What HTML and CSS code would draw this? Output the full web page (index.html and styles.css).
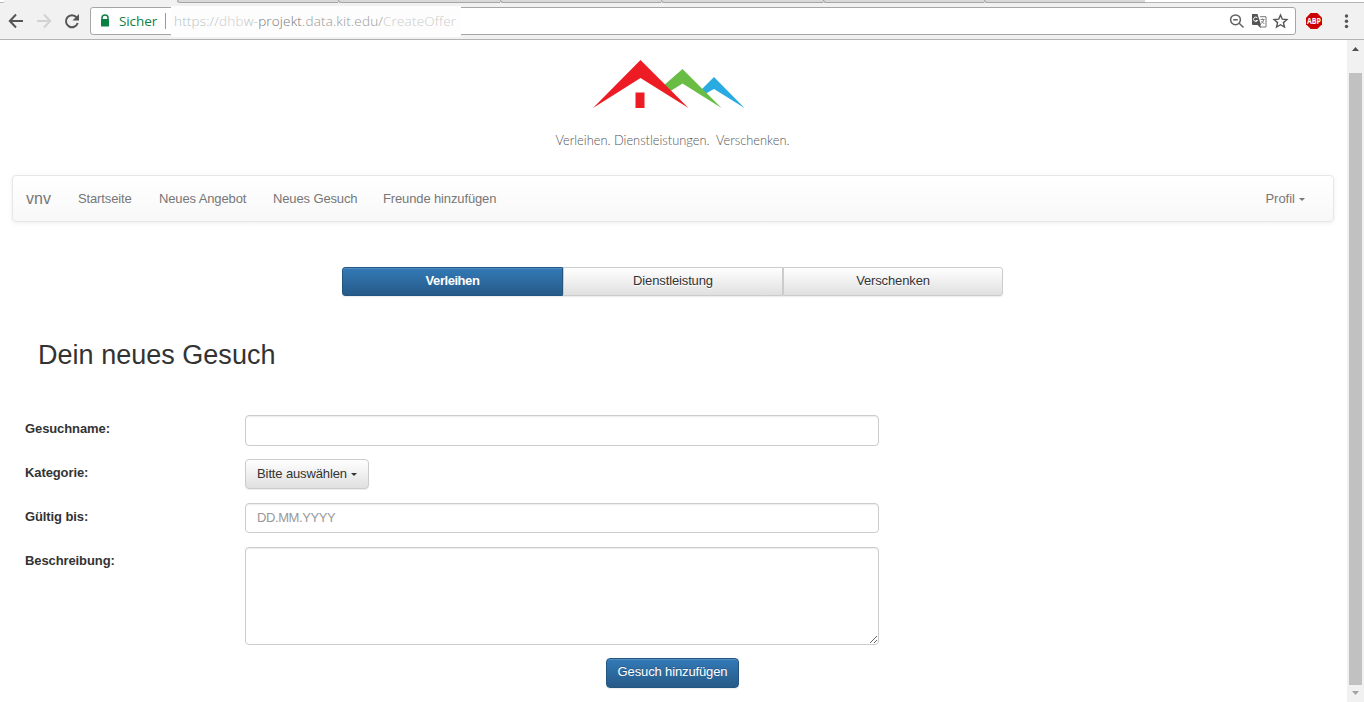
FILE: index.html
```html
<!DOCTYPE html>
<html lang="de">
<head>
<meta charset="utf-8">
<title>vnv – Neues Gesuch</title>
<link rel="stylesheet" href="styles.css">
</head>
<body>
<div class="tabs">
  <div class="tab-first"></div><div class="tab-active"></div>
  <div class="tab"></div><div class="tab"></div><div class="tab"></div><div class="tab"></div><div class="tab"></div><div class="tab"></div>
  <div class="tab-rest"></div>
</div>
<header class="toolbar">
  <svg class="nav-icons" width="90" height="36" viewBox="0 0 90 36" fill="none" stroke-width="2">
    <path d="M23 18H10M16 11.500L9.800 18l6.200 6.500" stroke="#555"/>
    <path d="M37 18h13M44 11.500l6.200 6.500-6.200 6.500" stroke="#d2d2d2"/>
    <path d="M76.600 14.400A6 6 0 1 0 77.700 20" stroke="#555"/>
    <path d="M79 11v6.500h-6.500z" fill="#555"/>
  </svg>
  <div class="address">
    <svg width="27" height="26" viewBox="0 0 27 26"><path d="M11 11.500V10a3 3 0 0 1 6 0v1.500" fill="none" stroke="#0b8043" stroke-width="1.500"/><rect x="10" y="11" width="8" height="7.500" rx=".6" fill="#0b8043"/></svg>
    <span class="secure">Sicher</span><span class="divider"></span>
    <span class="url"><i>https://</i><i class="pale">dhb</i><i>w-</i><b>projekt</b><i class="mid">.data.kit.edu/</i><i class="pale">CreateOffer</i></span>
    <svg class="actions" width="66" height="26" viewBox="0 0 66 26">
      <g fill="none" stroke="#616161" stroke-width="1.500"><circle cx="6.500" cy="11.800" r="4.900"/><path d="M10.200 15.300L14.500 19.500M4.200 11.800h4.600"/></g>
      <path d="M31 8.700h6v10.300H31" fill="#fff" stroke="#777"/>
      <path d="M23 6h5.500l3.500 11H24a1 1 0 0 1-1-1z" fill="#555"/><path d="M28.500 17l3 3v-3z" fill="#555"/>
      <path d="M28.400 9.800a2.200 2.200 0 1 0 .2 2.700h-1.900" fill="none" stroke="#fff"/>
      <path d="M31.500 11.500h4M33.500 10.500v1M35 11.500q-1 3-3 4M32.500 13l2.800 3" fill="none" stroke="#777" stroke-width=".9"/>
      <path d="M51.500 7l1.800 4.200 4.600.4-3.500 3 1.100 4.500-4-2.400-4 2.400 1.100-4.500-3.500-3 4.600-.4z" fill="none" stroke="#555" stroke-width="1.400"/>
    </svg>
  </div>
  <svg class="extensions" width="68" height="36" viewBox="0 0 68 36">
    <path d="M14.700 10h6.600l4.700 4.700v6.600L21.300 26h-6.600L10 21.300v-6.600z" fill="#c00"/>
    <text class="abp" x="18" y="21" text-anchor="middle" textLength="14" lengthAdjust="spacingAndGlyphs">ABP</text>
    <g fill="#555"><circle cx="50.500" cy="13" r="1.700"/><circle cx="50.500" cy="18.300" r="1.700"/><circle cx="50.500" cy="23.500" r="1.700"/></g>
  </svg>
</header>
<div class="viewport">
  <main class="page">
    <svg class="logo" width="270" height="110" viewBox="540 50 270 110">
      <path d="M698 93l16-16 30.500 31L714 89l-9 5z" fill="#29abe2"/>
      <path d="M662 87l20.500-18 39 39L682.500 83.500 669 92z" fill="#69bd45"/>
      <path d="M593 108l47.500-48 48 48-48-30z" fill="#ed1c24"/>
      <rect x="635.500" y="92.500" width="9" height="15.500" fill="#ed1c24"/>
      <text class="slogan" x="555.500" y="144.500" textLength="234" lengthAdjust="spacingAndGlyphs">Verleihen. Dienstleistungen. &#160;Verschenken.</text>
    </svg>
    <nav class="navbar">
      <a class="brand">vnv</a>
      <a class="n1">Startseite</a><a class="n2">Neues Angebot</a><a class="n3">Neues Gesuch</a><a class="n4">Freunde hinzufügen</a>
      <a class="profile">Profil<span class="caret"></span></a>
    </nav>
    <div class="segments">
      <button class="segment primary">Verleihen</button><button class="segment">Dienstleistung</button><button class="segment">Verschenken</button>
    </div>
    <h1>Dein neues Gesuch</h1>
    <form class="form">
      <label>Gesuchname:</label><input class="control tall" type="text">
      <label>Kategorie:</label><button type="button" class="select">Bitte auswählen<span class="caret"></span></button>
      <label>Gültig bis:</label><input class="control date" type="text" placeholder="DD.MM.YYYY">
      <label>Beschreibung:</label><textarea class="control area"></textarea>
    </form>
    <button class="submit primary">Gesuch hinzufügen</button>
  </main>
  <div class="scrollbar">
    <svg width="17" height="33" viewBox="0 0 17 33"><path d="M5 11h7L8.500 7z" fill="#505050"/></svg>
    <div class="thumb"></div>
    <svg width="17" height="17" viewBox="0 0 17 17"><path d="M5 6h7l-3.500 4z" fill="#a3a3a3"/></svg>
  </div>
</div>
</body>
</html>
```

FILE: styles.css
```css
* { box-sizing: border-box; }
body { margin: 0; height: 702px; overflow: hidden; display: flex; flex-direction: column; background: #fff; color: #333; font: 13px "Liberation Sans", Arial, sans-serif; }
button, input, textarea { font: inherit; color: inherit; margin: 0; }

.tabs { display: flex; height: 3px; background: #f1f1f1; }
.tab-first { width: 5px; background: #fff; border-bottom: 1px solid #b5b5b5; border-bottom-right-radius: 3px; }
.tab-active { width: 172px; }
.tab { width: 161.400px; background: #d9d9d9; border-bottom: 1px solid #a6a6a6; border-left: 1px solid #a6a6a6; border-bottom-left-radius: 3px; }
.tab-rest { flex: 1; background: #fff; border-bottom: 1px solid #b5b5b5; }

.toolbar { display: flex; height: 37px; background: #f1f1f1; border-bottom: 1px solid #b2b2b2; }
.address { width: 1206px; height: 28px; margin-top: 4px; display: flex; align-items: center; background: #fff; border: 1px solid #a6a6a6; border-radius: 3px; }
.address > svg { flex: none; }
.secure { width: 47px; padding-left: 1px; color: #0b8043; font: 13.500px "Open Sans", sans-serif; letter-spacing: -.1px; }
.divider { width: 1px; height: 16px; background: #999; }
.url { width: 290px; height: 31px; margin-left: 5px; padding: 6px 0 0 3px; background: #fdfdfd; color: #b8c4c0; font: 300 13.500px/18px "Open Sans", sans-serif; letter-spacing: .17px; white-space: nowrap; }
.url i { font-style: normal; }
.url b { font-weight: 300; color: #777; }
.url .pale { color: #ccc; }
.url .mid { color: #999; }
.actions { margin-left: auto; }
.abp { font: bold 8.500px "Open Sans", sans-serif; fill: #fff; }

.viewport { flex: 1; min-height: 0; display: flex; }
.page { width: 1347px; display: flex; flex-direction: column; }
.logo { margin: 10px 0 0 540px; flex: none; }
.slogan { font: 300 14px Lato, sans-serif; fill: #555; }

.navbar { height: 47px; margin: 15px 13px 0 12px; padding: 0 28px 0 13px; display: flex; align-items: center; border: 1px solid #e7e7e7; border-radius: 4px; background: linear-gradient(#fff, #f8f8f8); box-shadow: 0 1px 4px rgba(0,0,0,.075); color: #777; letter-spacing: -.13px; }
.navbar a { white-space: nowrap; }
.brand { width: 52px; font-size: 16px; padding-top: 1px; letter-spacing: 0; }
.n1 { width: 81px; }
.n2 { width: 114px; }
.n3 { width: 110px; }
.profile { margin-left: auto; letter-spacing: 0; }
.caret { display: inline-block; border: 3.500px solid transparent; border-top-color: currentColor; border-bottom: 0; margin-left: 4px; vertical-align: 2px; }

.segments { width: 661px; height: 30px; margin: 44px 0 0 342px; padding-top: 1px; display: flex; }
.segment { width: 220px; padding: 0 0 2px; border: 1px solid #ccc; background: linear-gradient(#fff, #e0e0e0); box-shadow: inset 0 1px 0 rgba(255,255,255,.15), 0 1px 1px rgba(0,0,0,.075); text-shadow: 0 1px 0 #fff; letter-spacing: -.13px; }
.segment:first-child { width: 221px; border-radius: 3px 0 0 3px; }
.segment:last-child { border-radius: 0 3px 3px 0; }
.primary { color: #fff; background: linear-gradient(#337ab7, #265a88); border: 1px solid #245580; text-shadow: 0 -1px 0 rgba(0,0,0,.2); }
.segment.primary { font-weight: bold; letter-spacing: -.45px; text-shadow: none; }

h1 { margin: 43px 0 0 38px; font-size: 27px; line-height: 32px; font-weight: normal; letter-spacing: .02px; }
.form { display: grid; grid-template-columns: 220px 634px; grid-template-rows: 30px 30px 30px 98px; row-gap: 14px; margin: 44px 0 0 25px; }
.form label { font-weight: bold; padding-top: 6px; line-height: 15px; letter-spacing: -.1px; }
.control { width: 634px; height: 30px; padding: 0 11px 2px; background: #fff; border: 1px solid #ccc; border-radius: 4px; box-shadow: inset 0 1px 1px rgba(0,0,0,.075); outline: 0; }
.tall { height: 31px; }
.date { letter-spacing: -.4px; }
.date::placeholder { color: #999; }
.area { height: 98px; resize: vertical; display: block; }
.select { width: 124px; height: 30px; padding: 0 0 2px; border: 1px solid #ccc; border-radius: 4px; background: linear-gradient(#fff, #e0e0e0); box-shadow: 0 1px 1px rgba(0,0,0,.075); white-space: nowrap; letter-spacing: -.13px; }
.submit { width: 133px; height: 30px; margin: 13px 0 0 606px; padding: 0 0 3px; border-radius: 4px; white-space: nowrap; letter-spacing: -.13px; box-shadow: inset 0 1px 0 rgba(255,255,255,.15), 0 1px 1px rgba(0,0,0,.075); }

.scrollbar { width: 17px; display: flex; flex-direction: column; background: #f1f1f1; }
.thumb { flex: 1; margin: 0 2px; background: #c1c1c1; }
```
